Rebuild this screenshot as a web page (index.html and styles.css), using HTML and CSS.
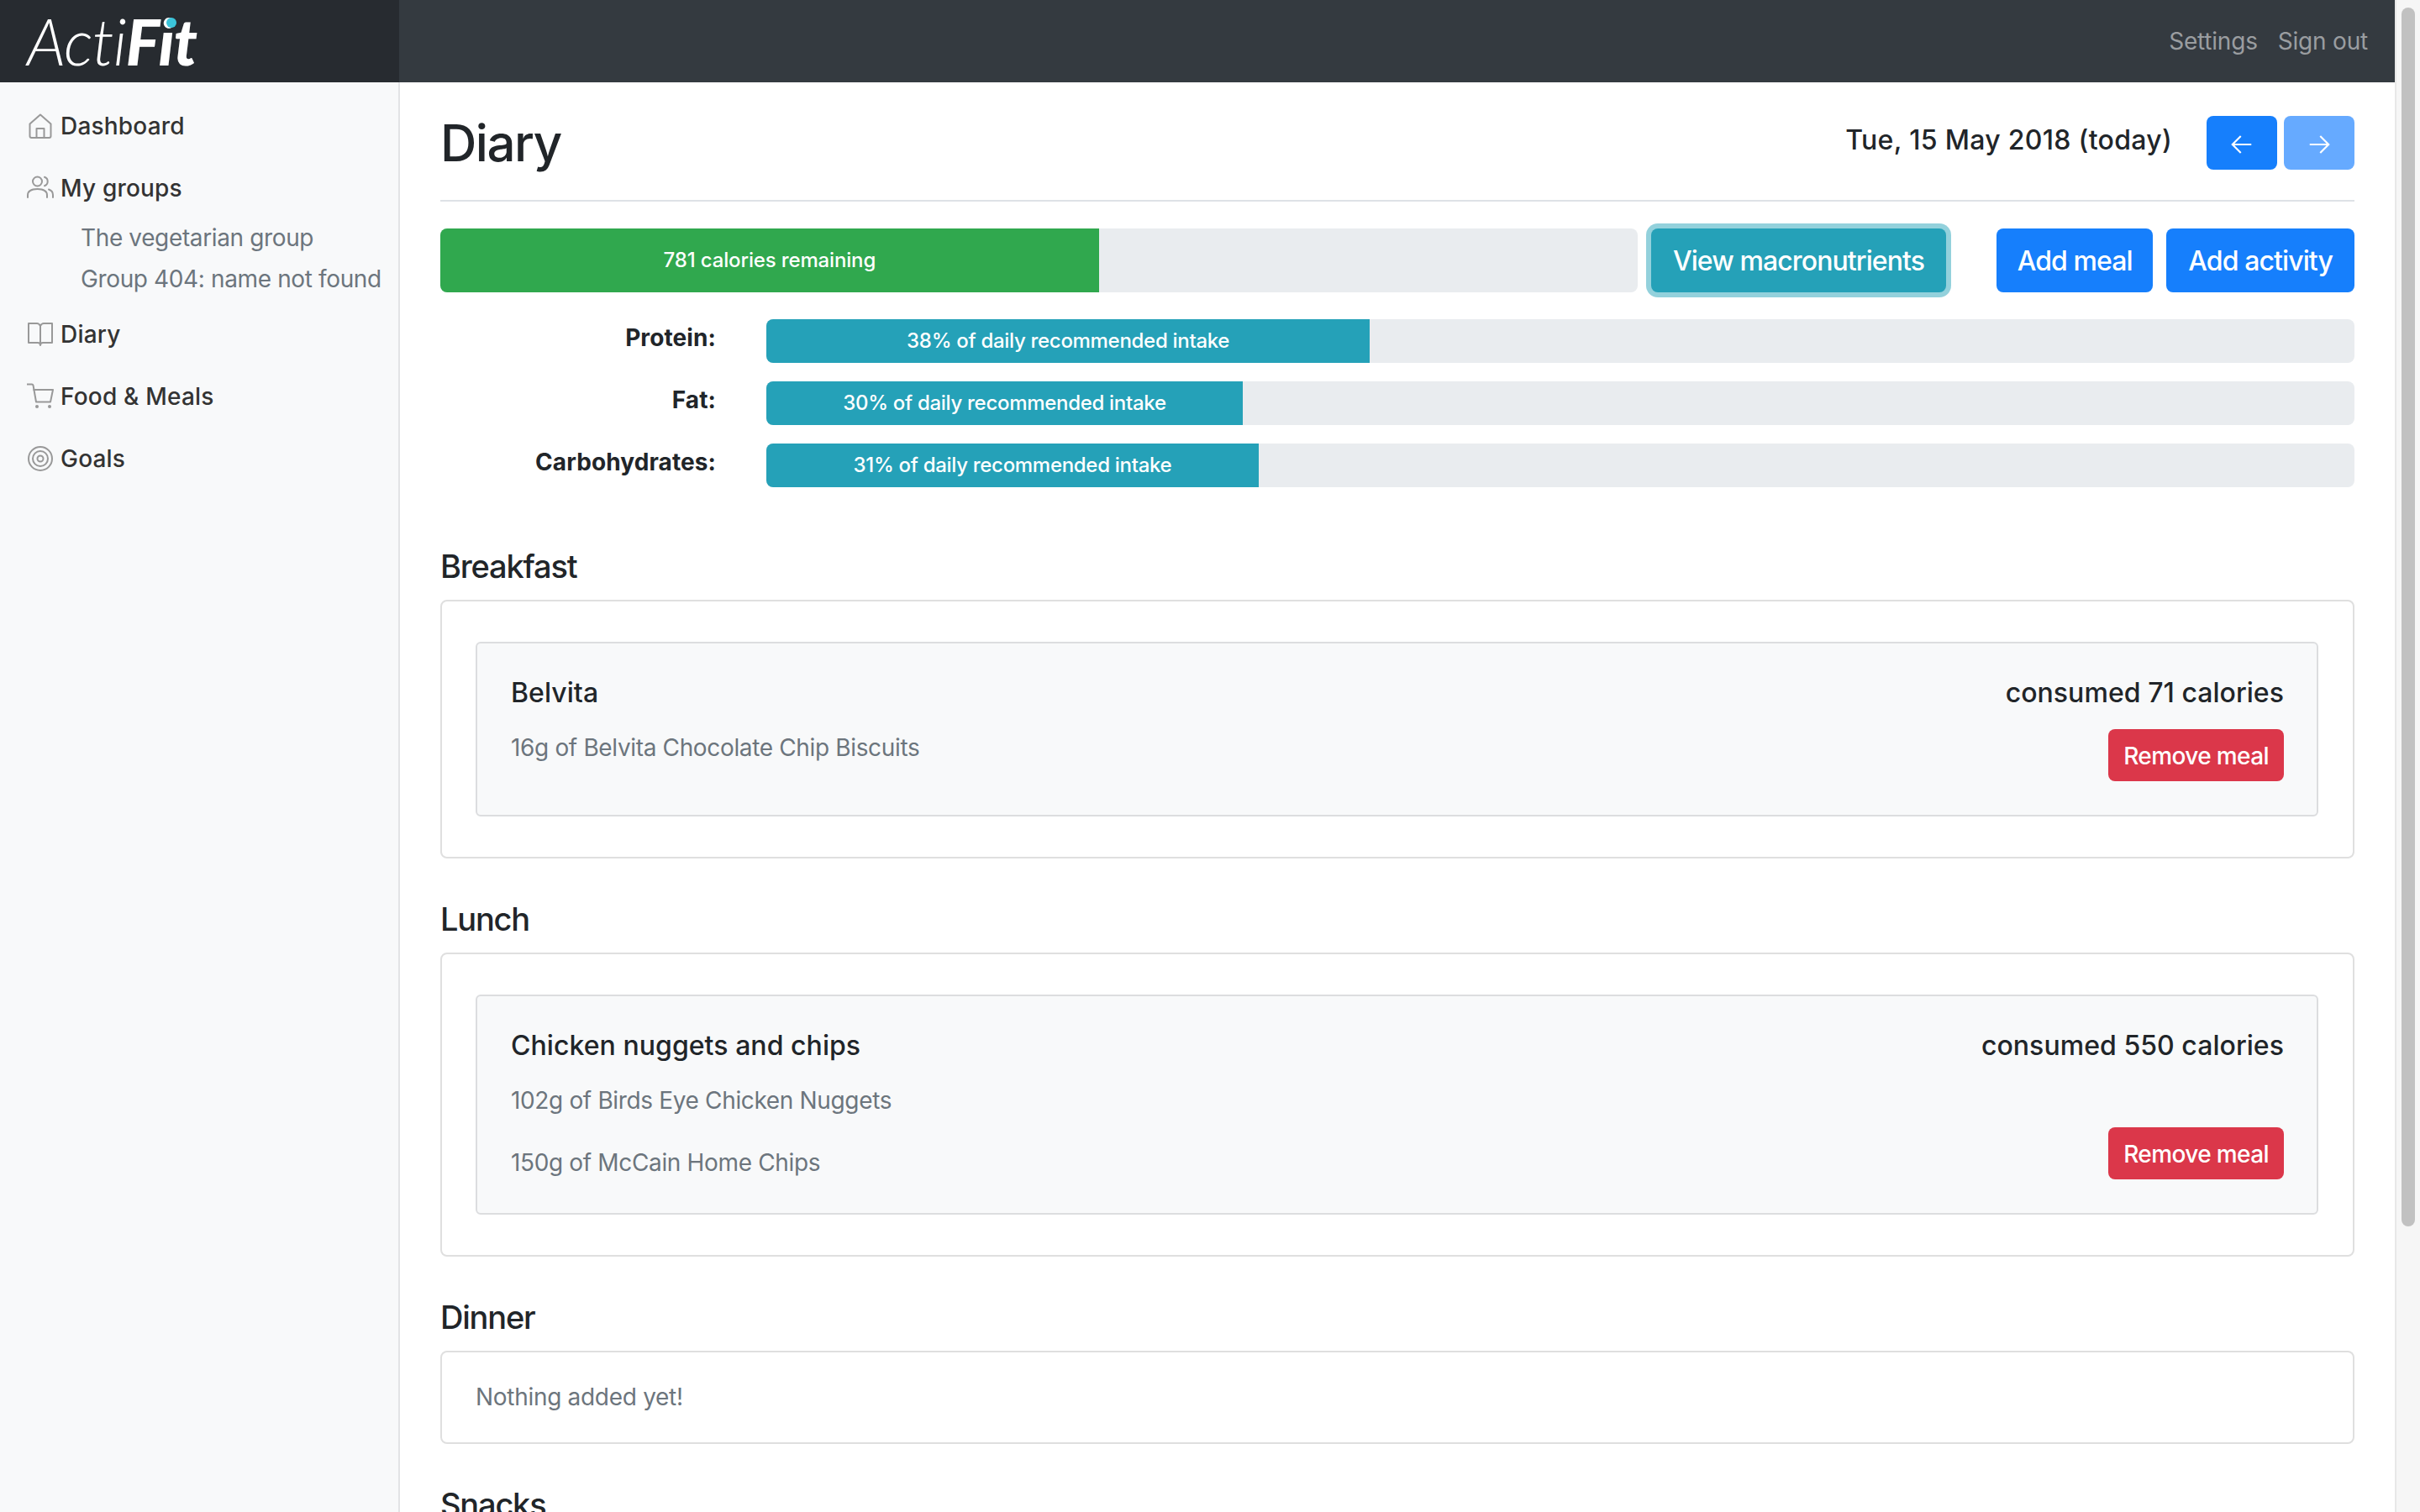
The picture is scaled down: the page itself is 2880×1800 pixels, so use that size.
FILE: index.html
```html
<!DOCTYPE html>
<html lang="en">
<head>
  <meta charset="UTF-8" />
  <title>ActiFit - Diary</title>
  <link rel="stylesheet" href="styles.css">
</head>
<body>
  <div class="page">
    <header class="topbar">
      <a class="brand"><span class="logo"><span class="logo-light">Acti</span><span class="logo-bold">Fit<span class="logo-dot"></span></span></span></a>
      <nav class="topnav">
        <a>Settings</a>
        <a>Sign out</a>
      </nav>
    </header>

    <div class="columns">
      <aside class="sidebar">
        <a class="side-link">
          <svg class="side-icon" viewBox="0 0 32 32"><path d="M3.500 13.500 16 2.500l12.500 11v14.500a2 2 0 0 1-2 2h-21a2 2 0 0 1-2-2z"/><path d="M11.500 30V19h9v11"/></svg>
          Dashboard
        </a>
        <a class="side-link">
          <svg class="side-icon" viewBox="0 0 32 32"><circle cx="12.500" cy="8" r="5.500"/><path d="M1 27v-2.500C1 20 5 17 12.500 17S24 20 24 24.500V27"/><path d="M21 2.800a5.500 5.500 0 0 1 0 10.400"/><path d="M26 17.500c3 1 5 3.300 5 6.500v3"/></svg>
          My groups
        </a>
        <div class="side-sub">
          <a>The vegetarian group</a>
          <a>Group 404: name not found</a>
        </div>
        <a class="side-link">
          <svg class="side-icon" viewBox="0 0 32 32"><path d="M16 6v22.500"/><path d="M16 6c-1-2-2-3-4-3H2v23h11c1.500 0 3 1 3 3 0-2 1.500-3 3-3h11V3H20c-2 0-3 1-4 3z"/></svg>
          Diary
        </a>
        <a class="side-link">
          <svg class="side-icon" viewBox="0 0 32 32"><path d="M0.500 1.500H6c.8 0 1.300.5 1.500 1.200L11 22.500h17L31 8H8"/><circle class="solid" cx="12" cy="28" r="2"/><circle class="solid" cx="27" cy="28" r="2"/></svg>
          Food &amp; Meals
        </a>
        <a class="side-link">
          <svg class="side-icon" viewBox="0 0 32 32"><circle cx="16" cy="16" r="14"/><circle cx="16" cy="16" r="9"/><circle cx="16" cy="16" r="3.500"/></svg>
          Goals
        </a>
      </aside>

      <main class="content">
        <div class="title-row">
          <h1>Diary</h1>
          <div class="date-nav">
            <span class="date">Tue, 15 May 2018 (today)</span>
            <button class="btn btn-arrow">
              <svg viewBox="0 0 24 24"><path d="M21 12H3.500M11 4l-8 8 8 8"/></svg>
            </button>
            <button class="btn btn-arrow is-disabled">
              <svg viewBox="0 0 24 24"><path d="M3 12h17.500M13 4l8 8-8 8"/></svg>
            </button>
          </div>
        </div>

        <div class="action-row">
          <div class="progress progress-main">
            <div class="bar bar-green" style="width: 55%">781 calories remaining</div>
          </div>
          <button class="btn btn-lg btn-info">View macronutrients</button>
          <button class="btn btn-lg btn-add">Add meal</button>
          <button class="btn btn-lg">Add activity</button>
        </div>

        <div class="macro-row">
          <span class="macro-label">Protein:</span>
          <div class="progress"><div class="bar bar-teal" style="width: 38%">38% of daily recommended intake</div></div>
        </div>
        <div class="macro-row">
          <span class="macro-label">Fat:</span>
          <div class="progress"><div class="bar bar-teal" style="width: 30%">30% of daily recommended intake</div></div>
        </div>
        <div class="macro-row">
          <span class="macro-label">Carbohydrates:</span>
          <div class="progress"><div class="bar bar-teal" style="width: 31%">31% of daily recommended intake</div></div>
        </div>

        <section class="meal-section first">
          <h2>Breakfast</h2>
          <div class="card">
            <div class="meal">
              <div class="meal-left">
                <div class="meal-name">Belvita</div>
                <div class="meal-item">16g of Belvita Chocolate Chip Biscuits</div>
              </div>
              <div class="meal-right">
                <div class="meal-cal">consumed 71 calories</div>
                <button class="btn btn-danger">Remove meal</button>
              </div>
            </div>
          </div>
        </section>

        <section class="meal-section">
          <h2>Lunch</h2>
          <div class="card">
            <div class="meal">
              <div class="meal-left">
                <div class="meal-name">Chicken nuggets and chips</div>
                <div class="meal-item">102g of Birds Eye Chicken Nuggets</div>
                <div class="meal-item">150g of McCain Home Chips</div>
              </div>
              <div class="meal-right">
                <div class="meal-cal">consumed 550 calories</div>
                <button class="btn btn-danger">Remove meal</button>
              </div>
            </div>
          </div>
        </section>

        <section class="meal-section">
          <h2>Dinner</h2>
          <div class="card card-empty">Nothing added yet!</div>
        </section>

        <section class="meal-section">
          <h2>Snacks</h2>
        </section>
      </main>
    </div>
  </div>

  <div class="scrollbar"><div class="scroll-thumb"></div></div>
</body>
</html>
```

FILE: styles.css
```css
html, body {
  margin: 0;
  height: 100%;
  overflow: hidden;
}

body {
  display: flex;
  font-family: "Inter", "Liberation Sans", sans-serif;
  color: #212529;
  background: #fff;
}

.page {
  flex: 1;
  min-width: 0;
  display: flex;
  flex-direction: column;
}

/* top bar */
.topbar {
  flex: none;
  height: 98px;
  display: flex;
  justify-content: space-between;
  align-items: center;
  background: #343a40;
}

.brand {
  width: 475px;
  height: 98px;
  box-sizing: border-box;
  padding-left: 32px;
  display: flex;
  align-items: center;
  background: #272b30;
  color: #fff;
}

.logo {
  font-family: "Lato", sans-serif;
  font-style: italic;
  font-size: 76px;
  line-height: 98px;
  letter-spacing: -1px;
}

.logo-light {
  font-weight: 300;
}

.logo-bold {
  position: relative;
  font-weight: 900;
}

.logo-dot {
  position: absolute;
  left: 48px;
  top: 18px;
  width: 12px;
  height: 12px;
  border-radius: 50%;
  background: #3bc4da;
}

.topnav {
  display: flex;
  gap: 24px;
  padding-right: 32px;
  font-size: 28px;
  letter-spacing: -0.2px;
  color: #9a9da0;
}

/* sidebar */
.columns {
  flex: 1;
  min-height: 0;
  display: flex;
}

.sidebar {
  flex: none;
  width: 476px;
  box-sizing: border-box;
  padding-top: 15px;
  padding-left: 32px;
  background: #f8f9fa;
  border-right: 2px solid #e3e4e6;
}

.side-link {
  height: 74px;
  display: flex;
  align-items: center;
  gap: 8px;
  font-size: 28px;
  letter-spacing: 0.2px;
  font-weight: 500;
  color: #333;
}

.side-icon {
  width: 32px;
  height: 32px;
  flex: none;
  fill: none;
  stroke: #999;
  stroke-width: 2;
  stroke-linejoin: round;
  stroke-linecap: round;
}

.side-icon .solid {
  fill: #999;
  stroke: none;
}

.side-sub {
  display: flex;
  flex-direction: column;
  margin: -2px 0 4px;
  padding-left: 64px;
  font-size: 28px;
  line-height: 49px;
  letter-spacing: -0.37px;
  color: #6c757d;
  white-space: nowrap;
}

/* main column */
.content {
  flex: 1;
  min-width: 0;
  padding: 0 48px;
  overflow: hidden;
}

.title-row {
  display: flex;
  justify-content: space-between;
  align-items: center;
  padding: 40px 0 36px;
  margin-bottom: 32px;
  border-bottom: 2px solid #dee2e6;
}

h1 {
  margin: 0;
  font-size: 60px;
  line-height: 64px;
  letter-spacing: -1.5px;
  font-weight: 500;
}

.date-nav {
  display: flex;
  align-items: center;
  gap: 8px;
}

.date {
  margin-right: 33px;
  padding-bottom: 8px;
  font-size: 32px;
  letter-spacing: 0.3px;
  font-weight: 500;
}

.btn {
  border: none;
  border-radius: 8px;
  background: #167ffc;
  color: #fff;
  font-family: inherit;
}

.btn-arrow {
  width: 84px;
  height: 64px;
  padding: 4px 0 0;
  display: flex;
  align-items: center;
  justify-content: center;
}

.btn-arrow svg {
  width: 30px;
  height: 30px;
  fill: none;
  stroke: #fff;
  stroke-width: 1.7;
}

.is-disabled {
  background: #66aaff;
}

.action-row {
  display: flex;
  gap: 16px;
  align-items: stretch;
}

.progress {
  flex: 1;
  display: flex;
  height: 52px;
  border-radius: 8px;
  overflow: hidden;
  background: #e9ecef;
}

.progress-main {
  height: 76px;
}

.bar {
  display: flex;
  align-items: center;
  justify-content: center;
  padding-bottom: 1px;
  color: #fff;
  font-size: 24px;
  letter-spacing: -0.3px;
  font-weight: 500;
  white-space: nowrap;
}

.bar-green {
  letter-spacing: -0.15px;
  background: #30a84e;
}

.bar-teal {
  background: #25a1b8;
}

.btn-lg {
  height: 76px;
  padding: 0 26px;
  font-size: 32px;
  letter-spacing: -0.9px;
  font-weight: 500;
}

.btn-info {
  background: #25a1b8;
  box-shadow: 0 0 0 6px #93d1dc;
}

.btn-add {
  margin-left: 44px;
  padding: 0 24.5px;
}

.macro-row {
  display: flex;
  align-items: center;
  gap: 60px;
  margin-top: 22px;
}

.action-row + .macro-row {
  margin-top: 32px;
}

.macro-label {
  width: 328px;
  flex: none;
  position: relative;
  top: -4px;
  text-align: right;
  font-size: 28px;
  letter-spacing: 0.1px;
  font-weight: 700;
}

/* meals */
.meal-section {
  margin-top: 48px;
}

.meal-section.first {
  margin-top: 70px;
}

h2 {
  margin: 0 0 16px;
  font-size: 38px;
  line-height: 48px;
  letter-spacing: -1.2px;
  font-weight: 500;
}

.card {
  padding: 48px 41px 48px 40px;
  border: 2px solid #dfdfdf;
  border-radius: 8px;
}

.card-empty {
  padding: 37px 40px;
  font-size: 28px;
  line-height: 33px;
  letter-spacing: -0.3px;
  color: #6c757d;
}

.meal {
  display: flex;
  justify-content: space-between;
  padding: 39px 39px 40px 40px;
  background: #f8f9fa;
  border: 2px solid #dcdddf;
  border-radius: 6px;
}

.meal-name,
.meal-cal {
  font-size: 32px;
  line-height: 40px;
  letter-spacing: 0.05px;
  font-weight: 500;
}

.meal-item {
  margin-top: 34px;
  font-size: 28px;
  line-height: 40px;
  letter-spacing: -0.35px;
  color: #6c757d;
}

.meal-name + .meal-item {
  margin-top: 25px;
}

.meal-right {
  display: flex;
  flex-direction: column;
  align-items: flex-end;
}

.btn-danger {
  height: 62px;
  margin-top: auto;
  padding: 2px 18px 0;
  background: #db374a;
  font-size: 28px;
  letter-spacing: -0.6px;
  font-weight: 500;
}

.meal-cal {
  margin-bottom: 23px;
}

/* fake window scrollbar */
.scrollbar {
  flex: none;
  width: 30px;
  padding: 9px 6px 0 6px;
  box-sizing: border-box;
  background: #f6f6f6;
  border-left: 2px solid #e8e8e8;
}

.scroll-thumb {
  height: 1451px;
  border-radius: 8px;
  background: #c1c1c1;
}
```
